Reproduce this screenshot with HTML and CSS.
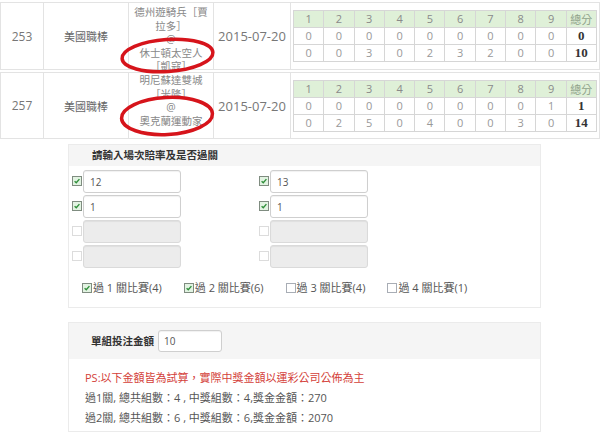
FILE: index.html
```html
<!DOCTYPE html>
<html lang="zh-Hant">
<head>
<meta charset="utf-8">
<title>過關試算</title>
<link rel="stylesheet" href="styles.css">
</head>
<body>
<div class="page">
  <table class="games">
    <colgroup>
      <col class="c-no"><col class="c-lg"><col class="c-tm"><col class="c-dt"><col class="c-sc">
    </colgroup>
    <tr class="r1">
      <td class="no">253</td>
      <td class="league">美國職棒</td>
      <td class="teams"><div class="tn">德州遊騎兵［賈拉多］<br>@<br>休士頓太空人<br>［凱寇］</div></td>
      <td class="date">2015-07-20</td>
      <td class="score">
        <table class="sc">
          <tr class="hd"><td>1</td><td>2</td><td>3</td><td>4</td><td>5</td><td>6</td><td>7</td><td>8</td><td>9</td><td class="tot">總分</td></tr>
          <tr><td>0</td><td>0</td><td>0</td><td>0</td><td>0</td><td>0</td><td>0</td><td>0</td><td>0</td><td class="tot">0</td></tr>
          <tr><td>0</td><td>0</td><td>3</td><td>0</td><td>2</td><td>3</td><td>2</td><td>0</td><td>0</td><td class="tot">10</td></tr>
        </table>
      </td>
    </tr>
    <tr class="r2">
      <td class="no">257</td>
      <td class="league">美國職棒</td>
      <td class="teams"><div class="tn">明尼蘇達雙城［米隆］<br>@<br>奧克蘭運動家</div></td>
      <td class="date">2015-07-20</td>
      <td class="score">
        <table class="sc">
          <tr class="hd"><td>1</td><td>2</td><td>3</td><td>4</td><td>5</td><td>6</td><td>7</td><td>8</td><td>9</td><td class="tot">總分</td></tr>
          <tr><td>0</td><td>0</td><td>0</td><td>0</td><td>0</td><td>0</td><td>0</td><td>0</td><td>1</td><td class="tot">1</td></tr>
          <tr><td>0</td><td>2</td><td>5</td><td>0</td><td>4</td><td>0</td><td>0</td><td>3</td><td>0</td><td class="tot">14</td></tr>
        </table>
      </td>
    </tr>
  </table>

  <svg class="marks" width="600" height="150" viewBox="0 0 600 150">
    <ellipse cx="167.5" cy="55.5" rx="45.5" ry="16" transform="rotate(-4 167.5 55.5)" fill="none" stroke="#d6141b" stroke-width="3.5"/>
    <ellipse cx="167" cy="116" rx="45.5" ry="18.5" transform="rotate(-3 167 116)" fill="none" stroke="#d6141b" stroke-width="3.5"/>
  </svg>

  <section class="panel odds">
    <div class="panel-hd">請輸入場次賠率及是否過關</div>
    <div class="odds-body">
      <div class="grid">
        <div class="item"><span class="cb on"><svg viewBox="0 0 10 10"><path d="M2 5.2 L4.1 7.2 L8 2.6"/></svg></span><input class="fld" value="12"></div>
        <div class="item"><span class="cb on"><svg viewBox="0 0 10 10"><path d="M2 5.2 L4.1 7.2 L8 2.6"/></svg></span><input class="fld" value="13"></div>
        <div class="item"><span class="cb on"><svg viewBox="0 0 10 10"><path d="M2 5.2 L4.1 7.2 L8 2.6"/></svg></span><input class="fld" value="1"></div>
        <div class="item"><span class="cb on"><svg viewBox="0 0 10 10"><path d="M2 5.2 L4.1 7.2 L8 2.6"/></svg></span><input class="fld" value="1"></div>
        <div class="item"><span class="cb off"></span><input class="fld dis" disabled></div>
        <div class="item"><span class="cb off"></span><input class="fld dis" disabled></div>
        <div class="item"><span class="cb off"></span><input class="fld dis" disabled></div>
        <div class="item"><span class="cb off"></span><input class="fld dis" disabled></div>
      </div>
      <div class="pass">
        <label class="pl"><span class="cb on"><svg viewBox="0 0 10 10"><path d="M2 5.2 L4.1 7.2 L8 2.6"/></svg></span>過 1 關比賽(4)</label>
        <label class="pl"><span class="cb on"><svg viewBox="0 0 10 10"><path d="M2 5.2 L4.1 7.2 L8 2.6"/></svg></span>過 2 關比賽(6)</label>
        <label class="pl"><span class="cb un"></span>過 3 關比賽(4)</label>
        <label class="pl"><span class="cb un"></span>過 4 關比賽(1)</label>
      </div>
    </div>
  </section>

  <section class="panel bet">
    <div class="bet-hd"><span class="bet-lbl">單組投注金額</span><input class="amt" value="10"></div>
    <div class="bet-body">
      <div class="ps">PS:以下金額皆為試算，實際中獎金額以運彩公司公佈為主</div>
      <div>過1關, 總共組數：4 , 中獎組數：4,獎金金額：270</div>
      <div>過2關, 總共組數：6 , 中獎組數：6,獎金金額：2070</div>
    </div>
  </section>
</div>
</body>
</html>
```

FILE: styles.css
```css
body {
  margin: 0;
  background: #fff;
  font-family: "Open Sans", "Noto Sans CJK TC", sans-serif;
  color: #555;
}

.page {
  position: relative;
  width: 600px;
}

/* ---------- games table ---------- */
.games {
  width: 600px;
  table-layout: fixed;
  border-collapse: separate;
  border-spacing: 0 2px;
}
.c-no { width: 43px; }
.c-lg { width: 85px; }
.c-tm { width: 85px; }
.c-dt { width: 77px; }
.c-sc { width: 310px; }

.games > tbody > tr > td {
  border-top: 1px solid #e3e3e3;
  border-bottom: 1px solid #e3e3e3;
  border-left: 1px solid #e3e3e3;
  padding: 0;
  text-align: center;
  vertical-align: middle;
}
.games > tbody > tr > td:last-child {
  border-right: 1px solid #e3e3e3;
}
.r1 { height: 68px; }
.r2 { height: 66px; }

.no {
  font-size: 12px;
  color: #777;
}
.league {
  font-size: 11px;
  color: #666;
}
.games > tbody > tr > td.teams {
  vertical-align: top;
  padding: 0 3px;
}
.tn {
  height: 64px;
  padding-top: 1px;
  font-size: 10.5px;
  line-height: 13.5px;
  color: #888;
}
.r1 .tn {
  height: 62px;
  padding-top: 3px;
}
.date {
  font-size: 13px;
  color: #777;
}
.games > tbody > tr > td.score {
  padding: 0 2px;
}

/* ---------- score sub-table ---------- */
.sc {
  width: 100%;
  table-layout: fixed;
  border-collapse: collapse;
}
.sc td {
  border: 1px solid #d6d6d6;
  height: 16px;
  padding: 0;
  line-height: 16px;
  font-size: 11px;
  color: #999;
  text-align: center;
}
.sc .hd td {
  background: #dff0d8;
  color: #8a8a8a;
}
.sc td.tot {
  font-family: "Liberation Serif", serif;
  font-weight: bold;
  font-size: 13px;
  color: #333;
}
.sc .hd td.tot {
  font-family: "Noto Sans CJK TC", sans-serif;
  font-weight: normal;
  font-size: 11px;
  color: #8fa28a;
}

/* ---------- annotation ---------- */
.marks {
  position: absolute;
  left: 0;
  top: 0;
  pointer-events: none;
}

/* ---------- panels ---------- */
.panel {
  width: 473px;
  margin-left: 68px;
  border: 1px solid #ebebeb;
  box-sizing: border-box;
}
.odds { margin-top: 3px; }
.panel-hd {
  height: 21px;
  line-height: 21px;
  padding-left: 23px;
  background: #f5f5f5;
  font-size: 10.5px;
  font-weight: bold;
  color: #333;
}
.odds-body {
  padding: 4px 3px 11px;
}
.grid {
  display: grid;
  grid-template-columns: 187px 187px;
  row-gap: 2px;
}
.item {
  display: flex;
  align-items: flex-start;
}
.cb {
  display: inline-block;
  width: 10px;
  height: 10px;
  box-sizing: border-box;
  border: 1px solid #9a9a9a;
  background: #fff;
  flex: none;
}
.cb svg {
  display: block;
  width: 8px;
  height: 8px;
}
.cb svg path {
  fill: none;
  stroke: #2f8f3a;
  stroke-width: 1.7;
}
.cb.on {
  border-color: #7f8c80;
  background: #e2f3e2;
}
.cb.off {
  border-color: #dcdcdc;
}
.cb.un {
  border-color: #a8adb5;
}
.item .cb {
  margin-top: 6px;
  margin-right: 1px;
}
.fld {
  width: 98px;
  height: 23px;
  box-sizing: border-box;
  margin: 0;
  padding: 0 0 0 6px;
  border: 1px solid #cfcfcf;
  border-radius: 3px;
  box-shadow: inset 0 1px 1px rgba(0, 0, 0, 0.06);
  background: #fff;
  font-family: "Open Sans", sans-serif;
  font-size: 10px;
  color: #555;
}
.fld.dis {
  background: #ececec;
  border-color: #dadada;
}

.pass {
  display: flex;
  gap: 22px;
  margin-top: 12px;
  padding-left: 10px;
  font-size: 11px;
  line-height: 16px;
  color: #555;
}
.pl {
  display: flex;
  align-items: flex-start;
}
.pl .cb {
  margin-top: 3px;
  margin-right: 1px;
}

.bet { margin-top: 14px; }
.bet-hd {
  height: 36px;
  box-sizing: border-box;
  padding: 7px 0 0 22px;
  background: #f5f5f5;
  display: flex;
  align-items: flex-start;
}
.bet-lbl {
  font-size: 10.5px;
  font-weight: bold;
  line-height: 22px;
  color: #333;
}
.amt {
  width: 64px;
  height: 22px;
  box-sizing: border-box;
  margin: 0 0 0 4px;
  padding: 0 0 0 5px;
  border: 1px solid #cfcfcf;
  border-radius: 3px;
  box-shadow: inset 0 1px 1px rgba(0, 0, 0, 0.06);
  font-family: "Open Sans", sans-serif;
  font-size: 10px;
  color: #555;
}
.bet-body {
  padding: 9px 16px 3px;
  font-size: 11px;
  line-height: 20px;
  color: #555;
}
.ps {
  color: #d43f3a;
}
```
